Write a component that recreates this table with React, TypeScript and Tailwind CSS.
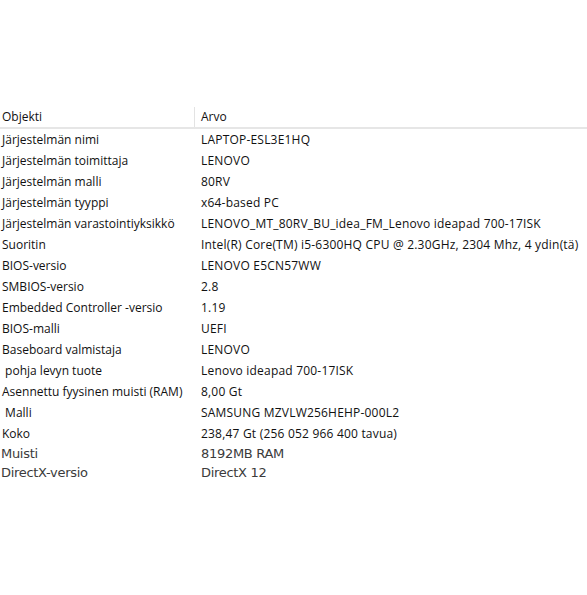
const rows: [string, string][] = [
  ['Järjestelmän nimi', 'LAPTOP-ESL3E1HQ'],
  ['Järjestelmän toimittaja', 'LENOVO'],
  ['Järjestelmän malli', '80RV'],
  ['Järjestelmän tyyppi', 'x64-based PC'],
  ['Järjestelmän varastointiyksikkö', 'LENOVO_MT_80RV_BU_idea_FM_Lenovo ideapad 700-17ISK'],
  ['Suoritin', 'Intel(R) Core(TM) i5-6300HQ CPU @ 2.30GHz, 2304 Mhz, 4 ydin(tä)'],
  ['BIOS-versio', 'LENOVO E5CN57WW'],
  ['SMBIOS-versio', '2.8'],
  ['Embedded Controller -versio', '1.19'],
  ['BIOS-malli', 'UEFI'],
  ['Baseboard valmistaja', 'LENOVO'],
  [' pohja levyn tuote', 'Lenovo ideapad 700-17ISK'],
  ['Asennettu fyysinen muisti (RAM)', '8,00 Gt'],
  [' Malli', 'SAMSUNG MZVLW256HEHP-000L2'],
  ['Koko', '238,47 Gt (256 052 966 400 tavua)'],
];

const extra: [string, string][] = [
  ['Muisti', '8192MB RAM'],
  ['DirectX-versio', 'DirectX 12'],
];

export default function App() {
  return (
    <div className="w-[587px] h-[595px] bg-white overflow-hidden pt-[106px] font-['Open_Sans',sans-serif] text-[12px] text-[#111]">
      <div className="flex h-[23px] items-center border-b-2 border-[#e6e6e6]">
        <div className="w-[194px] pl-[2px] leading-[23px] whitespace-pre">Objekti</div>
        <div className="h-[20px] w-px bg-[#e3e3e3] self-end" />
        <div className="pl-[6px] leading-[23px]">Arvo</div>
      </div>
      <div className="flex flex-col">
        {rows.map(([k, v]) => (
          <div key={k} className="flex h-[21px] items-center whitespace-pre">
            <div className="w-[201px] shrink-0 pl-[2px]">{k}</div>
            <div className="whitespace-nowrap tracking-[0.2px]">{v}</div>
          </div>
        ))}
        {extra.map(([k, v]) => (
          <div
            key={k}
            className="flex h-[19px] items-center font-['DejaVu_Sans',sans-serif] text-[13px] text-[#3b3b3b] tracking-[-0.3px]"
          >
            <div className="w-[201px] shrink-0 pl-[1px]">{k}</div>
            <div>{v}</div>
          </div>
        ))}
      </div>
    </div>
  );
}
